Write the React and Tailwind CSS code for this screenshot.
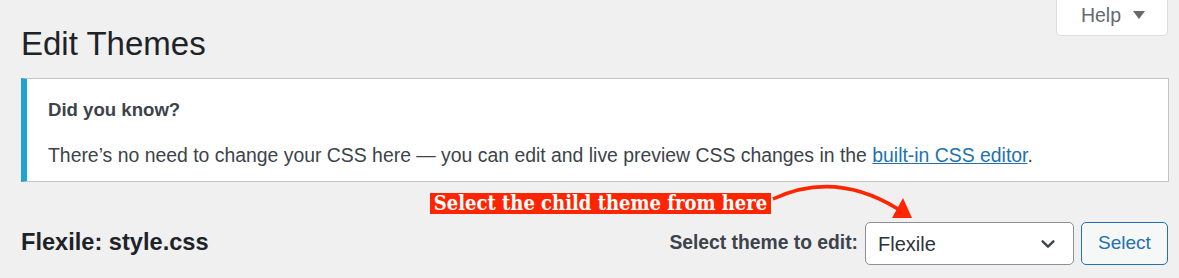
import React from "react";

export default function App() {
  return (
    <div
      className="relative min-h-screen bg-[#f0f0f1] pl-[21px] pr-[10px] text-[#3c434a]"
      style={{ fontFamily: '"Liberation Sans", Arial, sans-serif' }}
    >
      <div className="flex items-start justify-between">
        <h1 className="mt-[24px] text-[33px] leading-[40px] font-normal text-[#1d2327]">
          Edit Themes
        </h1>
        <button className="mr-px flex h-[36px] w-[112px] items-center justify-center gap-[12px] rounded-b-[5px] border border-t-0 border-[#dcdcde] bg-white pb-[6px] pl-[2px] text-[19.5px] leading-[24px] text-[#646970]">
          <span>Help</span>
          <svg width="12" height="8" viewBox="0 0 12 8">
            <polygon points="0,0 12,0 6,8" fill="#646970" />
          </svg>
        </button>
      </div>

      <div className="mt-[14px] border border-l-[6px] border-[#c3c4c7] border-l-[#22a1d5] bg-white pl-[21px] pt-[18px] pb-[13px]">
        <p className="text-[18.6px] leading-[26px] font-bold text-[#3c434a]">Did you know?</p>
        <p className="mt-[19px] text-[19.4px] leading-[26px] text-[#3c434a]">
          There’s no need to change your CSS here — you can edit and live preview CSS changes in the{" "}
          <a className="text-[#2271b1] underline">built-in CSS editor</a>.
        </p>
      </div>

      <div className="mt-[40px] flex items-center justify-between">
        <h2 className="mb-[4px] text-[23.6px] leading-[30px] font-bold text-[#1d2327]">Flexile: style.css</h2>
        <div className="flex items-center">
          <label className="mr-[7px] text-[19.3px] font-bold text-[#3c434a]">Select theme to edit:</label>
          <div className="flex h-[43px] w-[209px] items-center justify-between rounded-[5px] border border-[#8c8f94] bg-white pl-[12px] pr-[16px] text-[20px] text-[#2c3338]">
            <span>Flexile</span>
            <svg width="18" height="18" viewBox="0 0 20 20" fill="none" stroke="#3c434a" strokeWidth="2.6" strokeLinecap="round" strokeLinejoin="round">
              <path d="M4 7l6 6 6-6" />
            </svg>
          </div>
          <button className="ml-[7px] mr-px flex h-[43px] w-[87px] items-center justify-center rounded-[5px] border border-[#2271b1] bg-[#f6f7f7] text-[19px] text-[#2271b1]">
            Select
          </button>
        </div>
      </div>

      <div
        className="absolute left-[430px] top-[193px] flex h-[21px] w-[341px] items-center justify-center bg-[#ff2500] text-[20px] leading-[21px] font-bold text-white"
        style={{ fontFamily: '"DejaVu Serif Condensed", "Liberation Serif", Georgia, serif' }}
      >
        Select the child theme from here
      </div>
      <svg className="absolute left-[765px] top-[180px]" width="155" height="45" viewBox="0 0 155 45">
        <path d="M8 19 Q70 -10 133 29" fill="none" stroke="#ff2500" strokeWidth="3.5" />
        <polygon points="138,18 127,38 147,38" fill="#ff2500" />
      </svg>
    </div>
  );
}
